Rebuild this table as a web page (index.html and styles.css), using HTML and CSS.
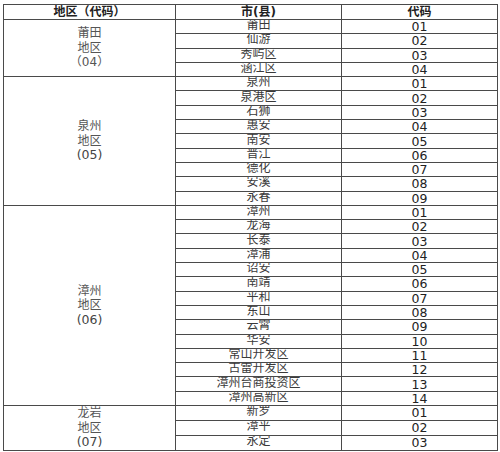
FILE: index.html
```html
<!DOCTYPE html>
<html lang="zh">
<head>
<meta charset="utf-8">
<link rel="stylesheet" href="styles.css">
</head>
<body>
<table class="codes">
  <colgroup><col class="c1"><col class="c2"><col class="c3"></colgroup>
  <thead>
    <tr class="head"><th>地区（代码）</th><th>市(县)</th><th>代码</th></tr>
  </thead>
  <tbody>
    <tr><td class="region" rowspan="4">莆田<br>地区<br>（04）</td><td class="city">莆田</td><td class="num">01</td></tr>
    <tr><td class="city">仙游</td><td class="num">02</td></tr>
    <tr><td class="city">秀屿区</td><td class="num">03</td></tr>
    <tr><td class="city">涵江区</td><td class="num">04</td></tr>

    <tr><td class="region" rowspan="9">泉州<br>地区<br><span class="num">(05)</span></td><td class="city">泉州</td><td class="num">01</td></tr>
    <tr><td class="city">泉港区</td><td class="num">02</td></tr>
    <tr><td class="city">石狮</td><td class="num">03</td></tr>
    <tr><td class="city">惠安</td><td class="num">04</td></tr>
    <tr><td class="city">南安</td><td class="num">05</td></tr>
    <tr><td class="city">晋江</td><td class="num">06</td></tr>
    <tr><td class="city">德化</td><td class="num">07</td></tr>
    <tr><td class="city">安溪</td><td class="num">08</td></tr>
    <tr><td class="city">永春</td><td class="num">09</td></tr>

    <tr><td class="region" rowspan="14">漳州<br>地区<br><span class="num">(06)</span></td><td class="city">漳州</td><td class="num">01</td></tr>
    <tr><td class="city">龙海</td><td class="num">02</td></tr>
    <tr><td class="city">长泰</td><td class="num">03</td></tr>
    <tr><td class="city">漳浦</td><td class="num">04</td></tr>
    <tr><td class="city">诏安</td><td class="num">05</td></tr>
    <tr><td class="city">南靖</td><td class="num">06</td></tr>
    <tr><td class="city">平和</td><td class="num">07</td></tr>
    <tr><td class="city">东山</td><td class="num">08</td></tr>
    <tr><td class="city">云霄</td><td class="num">09</td></tr>
    <tr><td class="city">华安</td><td class="num">10</td></tr>
    <tr><td class="city">常山开发区</td><td class="num">11</td></tr>
    <tr><td class="city">古雷开发区</td><td class="num">12</td></tr>
    <tr><td class="city">漳州台商投资区</td><td class="num">13</td></tr>
    <tr><td class="city">漳州高新区</td><td class="num">14</td></tr>

    <tr><td class="region" rowspan="3">龙岩<br>地区<br><span class="num">(07)</span></td><td class="city">新罗</td><td class="num">01</td></tr>
    <tr><td class="city">漳平</td><td class="num">02</td></tr>
    <tr><td class="city">永定</td><td class="num">03</td></tr>
  </tbody>
</table>
</body>
</html>
```
FILE: styles.css
```css
html, body {
  margin: 0;
  padding: 0;
  background: #ffffff;
}

body {
  padding: 4px 0 0 3px;
  font-family: "DejaVu Sans", "Noto Sans CJK SC", sans-serif;
  font-size: 12px;
  color: #3a3a3a;
}

.codes {
  border-collapse: collapse;
  width: 494px;
  table-layout: fixed;
}

.c1 { width: 172px; }
.c2 { width: 166px; }
.c3 { width: 156px; }

.codes th,
.codes td {
  border: 1px solid #4a4a4a;
  padding: 0;
  text-align: center;
  vertical-align: middle;
  line-height: 13px;
  white-space: nowrap;
  overflow: hidden;
}

.codes tr { height: 14.3px; }
.codes tr.head { height: 15px; }

.codes th {
  font-weight: bold;
  color: #222;
  font-size: 12px;
}

.codes td.city {
  line-height: 11px;
  padding-bottom: 2px;
  color: #3a3a3a;
}

.codes td.region {
  line-height: 14.5px;
  color: #555;
}

.num {
  font-size: 12.5px;
  color: #222;
}

.region .num { color: #444; font-size: 12.5px; }
```
